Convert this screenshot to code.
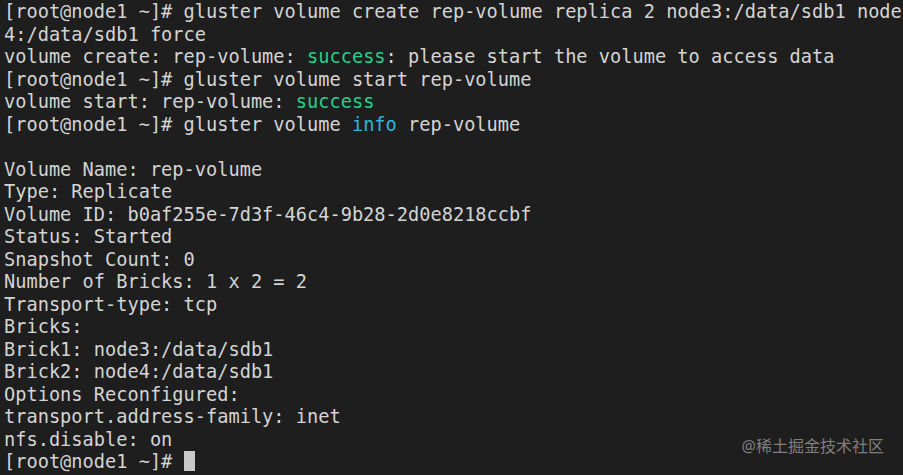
import React from "react";

const G = ({ children }: { children: React.ReactNode }) => (
  <span className="text-[#23d18b]">{children}</span>
);
const B = ({ children }: { children: React.ReactNode }) => (
  <span className="text-[#29b8db]">{children}</span>
);

export default function App() {
  const lines: React.ReactNode[] = [
    "[root@node1 ~]# gluster volume create rep-volume replica 2 node3:/data/sdb1 node",
    "4:/data/sdb1 force",
    <>volume create: rep-volume: <G>success</G>: please start the volume to access data</>,
    "[root@node1 ~]# gluster volume start rep-volume",
    <>volume start: rep-volume: <G>success</G></>,
    <>[root@node1 ~]# gluster volume <B>info</B> rep-volume</>,
    "\u00a0",
    "Volume Name: rep-volume",
    "Type: Replicate",
    "Volume ID: b0af255e-7d3f-46c4-9b28-2d0e8218ccbf",
    "Status: Started",
    "Snapshot Count: 0",
    "Number of Bricks: 1 x 2 = 2",
    "Transport-type: tcp",
    "Bricks:",
    "Brick1: node3:/data/sdb1",
    "Brick2: node4:/data/sdb1",
    "Options Reconfigured:",
    "transport.address-family: inet",
    "nfs.disable: on",
    <>[root@node1 ~]# <span className="inline-block w-[11px] h-[20px] bg-[#c8c8c8] align-[-3px]"></span></>,
  ];
  return (
    <div className="relative w-[903px] h-[475px] bg-[#1e1e1e] overflow-hidden">
      <div
        className="pl-[4px] pt-[1px] text-[#d4d4d4] text-[18.65px] leading-[22.5px] whitespace-pre"
        style={{ fontFamily: '"DejaVu Sans Mono", monospace' }}
      >
        {lines.map((l, i) => (
          <div key={i}>{l}</div>
        ))}
      </div>
      <div
        className="absolute right-[19px] bottom-[19px] text-[16px] leading-[20px] text-[#7f7f7f]"
        style={{ fontFamily: '"Noto Sans", "Noto Sans CJK SC", sans-serif' }}
      >
        @稀土掘金技术社区
      </div>
    </div>
  );
}
